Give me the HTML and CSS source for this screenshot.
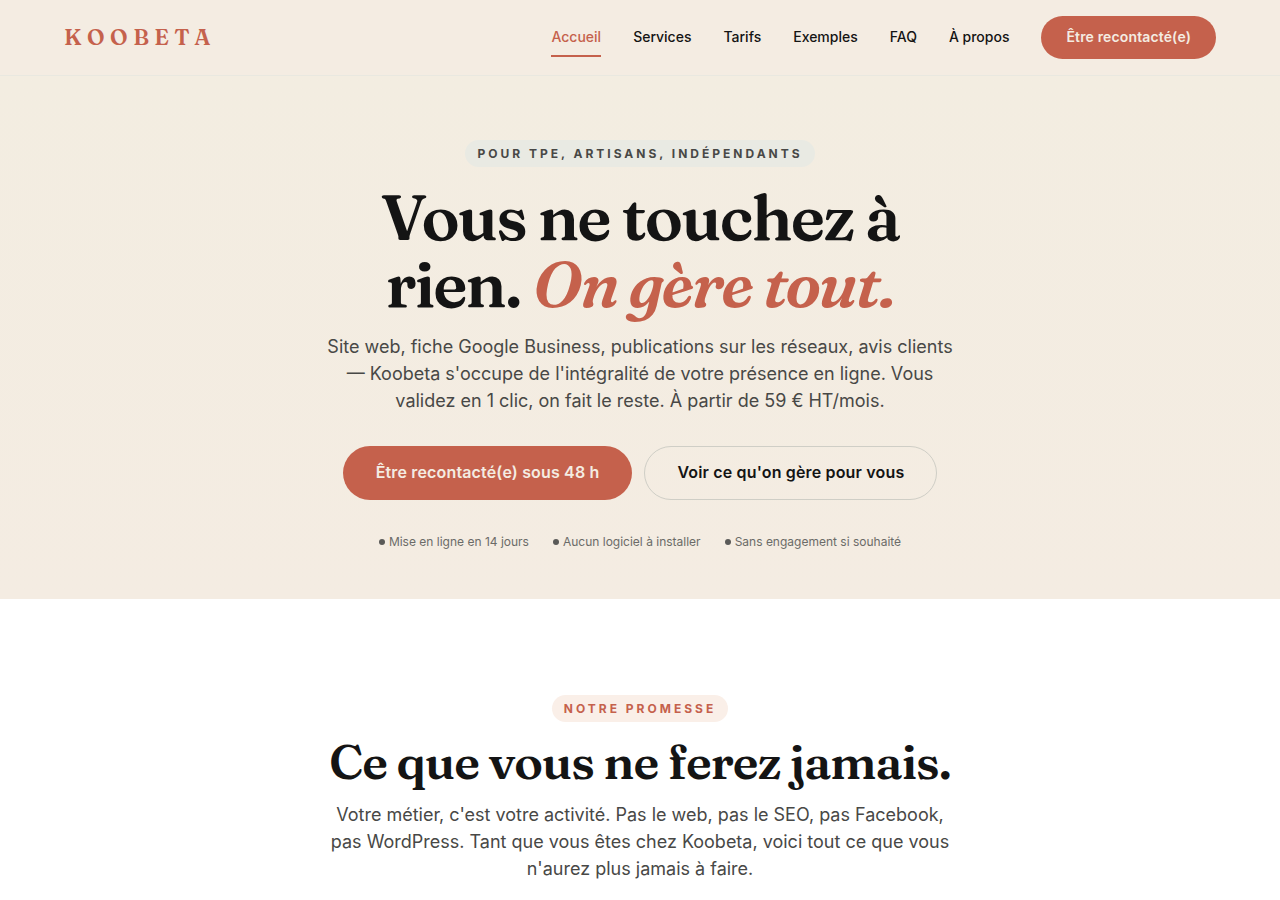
FILE: index.html
```
<!DOCTYPE html>
<html lang="fr">
<head>
  <meta charset="UTF-8">
  <meta name="viewport" content="width=device-width, initial-scale=1.0">
  <title>Koobeta</title>
  <link rel="stylesheet" href="styles.css">
</head>
<body>
  <header class="site-header">
    <a class="logo" href="#">KOOBETA</a>
    <nav class="nav">
      <a class="nav-link active" href="#">Accueil</a>
      <a class="nav-link" href="#services">Services</a>
      <a class="nav-link" href="#tarifs">Tarifs</a>
      <a class="nav-link" href="#exemples">Exemples</a>
      <a class="nav-link" href="#faq">FAQ</a>
      <a class="nav-link" href="#a-propos">À propos</a>
      <a class="button button-primary button-small" href="#contact">Être recontacté(e)</a>
    </nav>
  </header>

  <main>
    <section class="hero">
      <span class="eyebrow">Pour TPE, artisans, indépendants</span>
      <h1>Vous ne touchez à<br>rien. <em>On gère tout.</em></h1>
      <p class="lead">Site web, fiche Google Business, publications sur les réseaux, avis clients — Koobeta s'occupe de l'intégralité de votre présence en ligne. Vous validez en 1 clic, on fait le reste. À partir de 59 € HT/mois.</p>
      <div class="actions">
        <a class="button button-primary" href="#contact">Être recontacté(e) sous 48 h</a>
        <a class="button button-outline" href="#services">Voir ce qu'on gère pour vous</a>
      </div>
      <ul class="trust">
        <li>Mise en ligne en 14 jours</li>
        <li>Aucun logiciel à installer</li>
        <li>Sans engagement si souhaité</li>
      </ul>
    </section>

    <section class="promise" id="services">
      <span class="eyebrow eyebrow-accent">Notre promesse</span>
      <h2>Ce que vous ne ferez jamais.</h2>
      <p class="lead">Votre métier, c'est votre activité. Pas le web, pas le SEO, pas Facebook, pas WordPress. Tant que vous êtes chez Koobeta, voici tout ce que vous n'aurez plus jamais à faire.</p>
    </section>
  </main>
</body>
</html>
```
FILE: styles.css
```
:root {
  --accent: #c5614c;
  --ink: #141414;
  --text: #484846;
  --cream: #f4ece2;
  --serif: Fraunces, "Liberation Serif", serif;
}

* {
  box-sizing: border-box;
}

body {
  margin: 0;
  font-family: Inter, sans-serif;
  font-size: 16px;
  color: var(--ink);
  background-color: #fff;
}

a {
  color: inherit;
  text-decoration: none;
}

/* Header */
.site-header {
  display: flex;
  align-items: center;
  justify-content: space-between;
  padding: 16px 64px;
  background-color: var(--cream);
  border-bottom: 1px solid #e9e8e0;
}

.logo {
  font-family: var(--serif);
  font-size: 22px;
  font-weight: 600;
  line-height: 27px;
  letter-spacing: 0.25em;
  color: var(--accent);
}

.nav {
  display: flex;
  align-items: center;
  gap: 32px;
}

.nav-link {
  padding: 8px 0 7px;
  font-size: 14px;
  font-weight: 500;
  line-height: 22px;
  border-bottom: 2px solid transparent;
}

.nav-link.active {
  color: var(--accent);
  border-color: var(--accent);
}

/* Buttons */
.button {
  padding: 13px 32px 15px;
  border: 1px solid transparent;
  border-radius: 999px;
  font-weight: 600;
  line-height: 24px;
  letter-spacing: 0.01em;
}

.button-primary {
  background-color: var(--accent);
  color: var(--cream);
}

.button-outline {
  border-color: #cfcec6;
}

.button-small {
  padding: 9px 24px 11px;
  font-size: 14px;
  line-height: 21px;
}

/* Sections */
.hero,
.promise {
  display: flex;
  flex-direction: column;
  align-items: center;
  text-align: center;
}

.hero {
  padding: 64px 24px 48px;
  background-color: #f4ede2;
  background-image: linear-gradient(#f3ede1, #f4ece2);
}

.promise {
  padding: 96px 24px;
}

.eyebrow {
  padding: 4px 12px;
  border-radius: 999px;
  font-size: 12px;
  font-weight: 700;
  line-height: 19px;
  letter-spacing: 0.25em;
  text-transform: uppercase;
  color: var(--text);
  background-color: #e9eae3;
}

.eyebrow-accent {
  color: var(--accent);
  background-color: #faefe8;
}

h1,
h2 {
  margin: 0;
  font-family: var(--serif);
  font-weight: 600;
}

h1 {
  margin: 16px 0;
  font-size: 64px;
  line-height: 67px;
  letter-spacing: -0.03em;
}

h1 em {
  color: var(--accent);
}

h2 {
  margin: 13px 0;
  font-size: 48px;
  line-height: 53px;
  letter-spacing: -0.02em;
}

.lead {
  max-width: 640px;
  margin: 0;
  font-size: 18px;
  line-height: 27px;
  color: var(--text);
}

.actions {
  display: flex;
  flex-wrap: wrap;
  justify-content: center;
  gap: 12px;
  margin-top: 32px;
}

.trust {
  display: flex;
  flex-wrap: wrap;
  justify-content: center;
  gap: 24px;
  margin: 32px 0 0;
  padding: 0;
  list-style: none;
  font-size: 12px;
  line-height: 19px;
  color: #6b6b68;
}

.trust li {
  display: flex;
  align-items: center;
  gap: 4px;
}

.trust li::before {
  content: "";
  width: 6px;
  height: 6px;
  border-radius: 50%;
  background-color: #5a5a58;
}
```
